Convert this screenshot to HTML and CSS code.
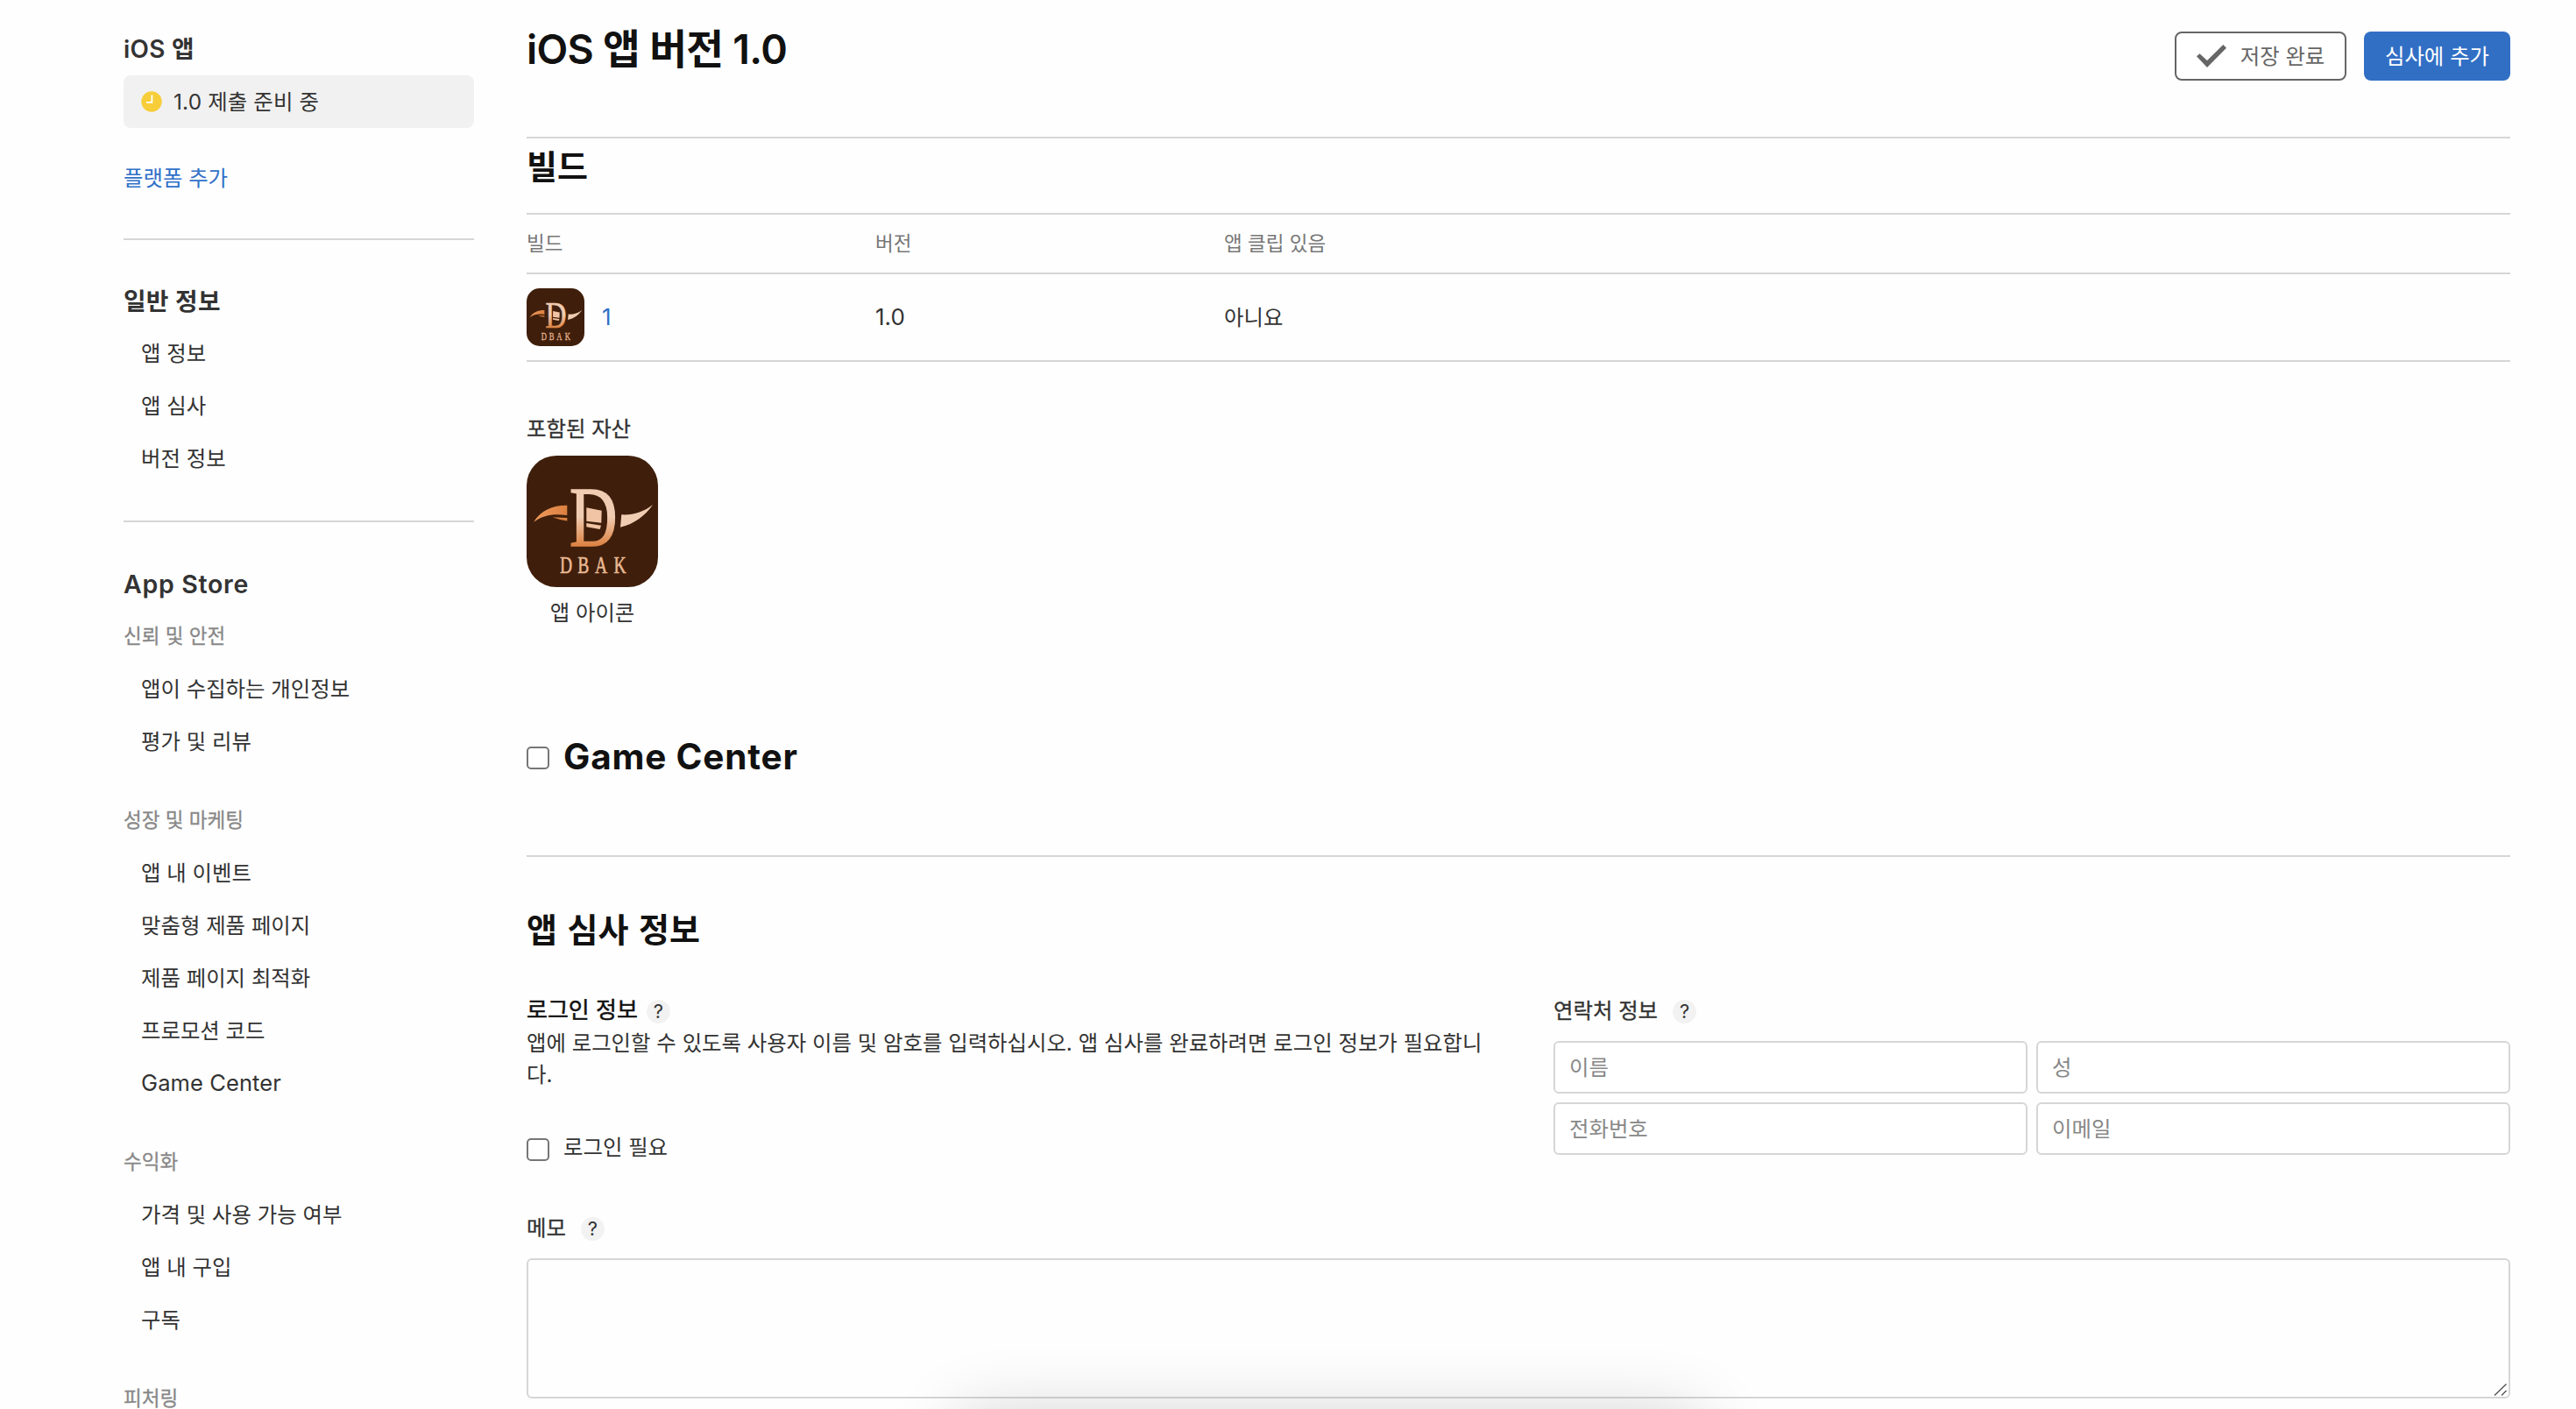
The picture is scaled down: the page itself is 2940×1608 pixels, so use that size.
FILE: index.html
```html
<!DOCTYPE html>
<html lang="ko">
<head>
<meta charset="utf-8">
<title>iOS 앱 버전 1.0</title>
<link rel="stylesheet" href="styles.css">
</head>
<body>
<svg class="defs" width="0" height="0" aria-hidden="true">
  <defs>
    <linearGradient id="copper" x1="0" y1="0" x2="0" y2="1">
      <stop offset="0.5" stop-color="#f0ccb2"/>
      <stop offset="0.8" stop-color="#dd8344"/>
    </linearGradient>
    <linearGradient id="wing" x1="0" y1="0" x2="1" y2="0">
      <stop offset="0" stop-color="#ef9a5c"/>
      <stop offset="1" stop-color="#dc8040"/>
    </linearGradient>
    <symbol id="dbak" viewBox="0 0 150 150">
      <rect width="150" height="150" rx="34" fill="#3f1f0b"/>
      <path d="M8 75.700C17 62 30 56.500 46.300 56.700V68C32 66 20 67 8 75.700Z" fill="url(#wing)"/>
      <path d="M29.700 70.300L46.300 71V74.500Q38 73.500 29.700 70.300Z" fill="#dc8040"/>
      <path d="M68.300 59.300L85.700 62.700L85.300 76.700L68.300 74.700ZM68.300 77L85 79.700L83.700 84L68.300 81.300Z" fill="#f0c4a4"/>
      <path d="M108.300 67.300C122 68 134 64 144 56C135 69 123 78 107 81.700Z" fill="#f0ccb2"/>
      <text class="logo-d" transform="translate(49 102.500) scale(.77 1)" fill="url(#copper)" stroke="url(#copper)">D</text>
      <text class="logo-name" transform="translate(38 134) scale(.7 1)" x="0 29 57 88">DBAK</text>
    </symbol>
  </defs>
</svg>
<div class="page">
  <nav class="sidebar">
    <h2 class="side-title">iOS 앱</h2>
    <a class="version">
      <svg class="clock" viewBox="0 0 24 24"><circle cx="12" cy="12" r="11.700" fill="#f7ce3a"/><path d="M12.400 4.500V12.800H6" fill="none" stroke="#fff" stroke-width="1.800"/></svg>
      <span>1.0 제출 준비 중</span>
    </a>
    <a class="add-platform">플랫폼 추가</a>
    <hr class="side-rule">
    <h2 class="side-title">일반 정보</h2>
    <ul class="links">
      <li>앱 정보</li><li>앱 심사</li><li>버전 정보</li>
    </ul>
    <hr class="side-rule second">
    <h2 class="side-title store">App Store</h2>
    <h3 class="side-sub">신뢰 및 안전</h3>
    <ul class="links">
      <li>앱이 수집하는 개인정보</li><li>평가 및 리뷰</li>
    </ul>
    <h3 class="side-sub">성장 및 마케팅</h3>
    <ul class="links">
      <li>앱 내 이벤트</li><li>맞춤형 제품 페이지</li><li>제품 페이지 최적화</li><li>프로모션 코드</li><li class="latin">Game Center</li>
    </ul>
    <h3 class="side-sub">수익화</h3>
    <ul class="links">
      <li>가격 및 사용 가능 여부</li><li>앱 내 구입</li><li>구독</li>
    </ul>
    <h3 class="side-sub">피처링</h3>
  </nav>

  <main class="main">
    <header class="top">
      <h1>iOS 앱 버전 1.0</h1>
      <div class="actions">
        <button class="btn saved"><svg class="check" viewBox="0 0 34 26"><path d="M0 13.300L3.500 10.200L12 18L30.300 0L34 3.700L12 26Z" fill="#666"/></svg><span>저장 완료</span></button>
        <button class="btn primary">심사에 추가</button>
      </div>
    </header>

    <section class="build">
      <h2 class="heading">빌드</h2>
      <div class="row head"><span>빌드</span><span>버전</span><span>앱 클립 있음</span></div>
      <div class="row body">
        <div class="build-cell"><svg class="icon-small"><use href="#dbak"/></svg><a>1</a></div>
        <span>1.0</span><span>아니요</span>
      </div>
    </section>

    <section class="assets">
      <div class="label">포함된 자산</div>
      <figure>
        <svg class="icon-large"><use href="#dbak"/></svg>
        <figcaption>앱 아이콘</figcaption>
      </figure>
    </section>

    <section class="game">
      <i class="checkbox"></i><h2 class="heading game-title">Game Center</h2>
    </section>

    <section class="review">
      <h2 class="heading">앱 심사 정보</h2>
      <div class="cols">
        <div class="login">
          <h3 class="field-title dark"><span>로그인 정보</span><i class="help">?</i></h3>
          <p>앱에 로그인할 수 있도록 사용자 이름 및 암호를 입력하십시오. 앱 심사를 완료하려면 로그인 정보가 필요합니<br>다.</p>
          <label class="check-row"><i class="checkbox"></i><span>로그인 필요</span></label>
        </div>
        <div class="contact">
          <h3 class="field-title"><span>연락처 정보</span><i class="help">?</i></h3>
          <div class="inputs">
            <div class="input">이름</div><div class="input">성</div>
            <div class="input">전화번호</div><div class="input">이메일</div>
          </div>
        </div>
      </div>
      <h3 class="field-title memo-title"><span>메모</span><i class="help">?</i></h3>
      <div class="memo">
        <svg class="grip" viewBox="0 0 16 14"><path d="M1 13.500L14.500 0.500M9 13.500L14.500 8" stroke="#555" stroke-width="1.400" fill="none"/></svg>
      </div>
    </section>
  </main>
</div>
<div class="dock-clip"><div class="dock"></div></div>
</body>
</html>
```
FILE: styles.css
```css
* { box-sizing: border-box; margin: 0; padding: 0; }
html, body { height: 1608px; overflow: hidden; }
body {
  position: relative;
  background: #fefefe;
  color: #333;
  font-family: Inter, "Noto Sans CJK KR", sans-serif;
  font-size: 24.4px;
  line-height: 36px;
}
h1, h2, h3 { font-weight: 600; }
ul { list-style: none; }
a { color: #3070c8; }
i { font-style: normal; }
svg { display: block; flex: none; }
.defs { position: absolute; }

.page { display: flex; gap: 60px; padding: 0 75px 0 141px; height: 1608px; }

/* Sidebar */
.sidebar { width: 400px; flex: none; padding-top: 26px; }
.side-title { font-size: 27.8px; line-height: 40px; height: 60px; padding-top: 10px; letter-spacing: .3px; }
.side-title.store { font-size: 28.5px; letter-spacing: .7px; padding-top: 11px; }
.version {
  display: flex;
  align-items: center;
  gap: 13px;
  height: 60px;
  padding: 0 20px;
  border-radius: 8px;
  background: #f1f1f1;
  color: #333;
}
.version span { letter-spacing: .15px; }
.clock { width: 24px; height: 24px; }
.add-platform { display: block; margin-top: 39px; }
.side-rule { border: 0; height: 2px; background: #d6d6d6; margin: 51px 0 40px; }
.side-rule.second { margin: 41px 0 40px; }
.side-title + .links { margin-top: -1px; }
.links li { height: 60px; line-height: 60px; padding-left: 20px; }
.links .latin { font-size: 25.5px; letter-spacing: .1px; }
.side-sub { height: 60px; line-height: 60px; font-size: 22.5px; font-weight: 400; color: #888; -webkit-text-stroke: .3px #888; }
.links + .side-sub { margin-top: 30px; }

/* Page header */
.main { flex: 1; min-width: 0; }
.top {
  display: flex;
  justify-content: space-between;
  height: 158px;
  padding-top: 36px;
  border-bottom: 2px solid #d6d6d6;
}
h1 { font-size: 46.5px; line-height: 41px; letter-spacing: -.7px; color: #111; }
.actions { display: flex; gap: 20px; }
.btn {
  display: flex;
  align-items: center;
  justify-content: center;
  height: 56px;
  border: 0;
  border-radius: 8px;
  font: inherit;
}
.saved { width: 196px; gap: 16px; border: 2px solid #666; background: #fff; color: #666; }
.check { width: 34px; height: 26px; }
.primary { width: 167px; background: #316fc5; color: #fff; }

/* Build table */
.heading { font-size: 38px; line-height: 50px; color: #111; word-spacing: 2px; }
.build .heading { height: 85px; padding-top: 7px; }
.row { display: grid; grid-template-columns: 398px 398px 1fr; align-items: center; }
.head { height: 70px; border-top: 2px solid #d6d6d6; border-bottom: 2px solid #d6d6d6; font-size: 22.5px; color: #777; }
.body { height: 100px; border-bottom: 2px solid #d6d6d6; font-size: 26px; }
.body span:last-child { font-size: 24.4px; }
.build-cell { display: flex; align-items: center; gap: 20px; }
.icon-small { width: 66px; height: 66px; }

.assets { padding-top: 58px; height: 413px; }
.label { height: 49px; -webkit-text-stroke: .3px #333; }
.assets figure { width: 150px; text-align: center; }
.icon-large { width: 150px; height: 150px; }
.assets figcaption { margin-top: 11px; }
.logo-d { font: 98px "Liberation Serif", serif; stroke-width: 1.6px; }
.logo-name { font: 28px "Liberation Serif", serif; fill: #eab994; stroke: #eab994; stroke-width: .6px; }

.checkbox { flex: none; width: 26px; height: 26px; border: 2px solid #767676; border-radius: 5px; background: #fff; }
.game { display: flex; align-items: center; gap: 16px; height: 152px; padding-bottom: 74px; border-bottom: 2px solid #d6d6d6; }
.game-title { font-size: 40.5px; font-weight: 700; letter-spacing: .8px; word-spacing: 0; }
.game .checkbox { margin-top: 1px; }

/* Review information */
.review .heading { padding-top: 58px; }
.cols { display: grid; grid-template-columns: 1112px 1092px; gap: 60px; padding-top: 48px; }
.field-title { display: flex; align-items: center; gap: 17px; height: 38px; font-size: 24.4px; font-weight: 400; -webkit-text-stroke: .3px #333; }
.field-title.dark { gap: 10px; color: #111; font-size: 26px; -webkit-text-stroke: .5px #111; }
.help { width: 27px; height: 27px; margin-top: 2px; border-radius: 50%; background: #f2f2f2; font-size: 22px; line-height: 27px; text-align: center; color: #333; -webkit-text-stroke: 0; }
.check-row { display: flex; gap: 16px; margin-top: 47px; }
.check-row .checkbox { margin-top: 8px; }
.inputs { display: grid; grid-template-columns: 1fr 1fr; gap: 10px; margin-top: 16px; }
.input { height: 60px; border: 2px solid #d6d6d6; border-radius: 6px; background: #fff; padding: 0 16px; line-height: 57px; color: #888; }
.memo-title { margin-top: 55px; }
.memo { position: relative; height: 160px; margin-top: 16px; border: 2px solid #d6d6d6; border-radius: 6px; }
.grip { position: absolute; right: 1px; bottom: 1px; width: 16px; height: 14px; }

/* Soft shadow of the floating bar below the window edge */
.dock-clip { position: absolute; inset: 0; overflow: hidden; pointer-events: none; }
.dock { position: absolute; left: 1090px; top: 1616px; width: 856px; height: 120px; border-radius: 30px; box-shadow: 0 0 80px rgba(0, 0, 0, .19); }
```
